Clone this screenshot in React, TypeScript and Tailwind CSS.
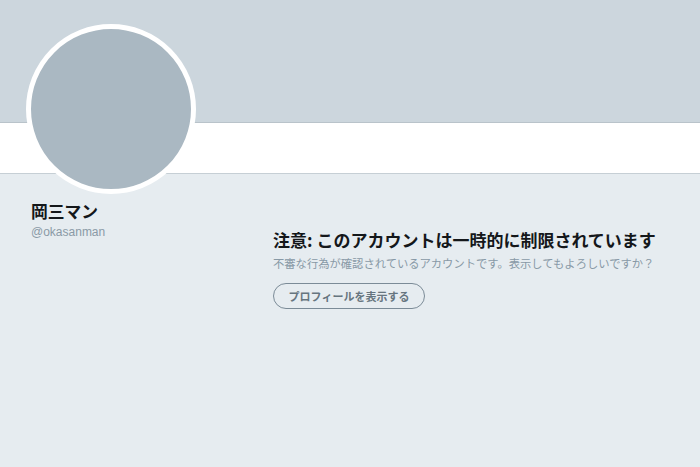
const jp = "font-['Noto_Sans_CJK_JP','Noto_Sans',sans-serif]";

const App = () => {
  return (
    <div className={`relative flex h-[467px] w-[700px] flex-col overflow-hidden bg-[#e6ecf0] ${jp}`}>
      <div className="h-[123px] shrink-0 border-b border-[#b9c3ca] bg-[#ccd6dd]" />
      <div className="h-[51px] shrink-0 border-b border-[#c6cfd5] bg-white" />

      {/* avatar sits over banner + nav */}
      <div className="absolute left-[26px] top-[24px] h-[170px] w-[170px] rounded-full border-[5px] border-white bg-[#aab8c2]" />

      <div className="flex flex-1">
        <div className="w-[273px] shrink-0 pl-[31px] pt-[25px]">
          <h1 className="text-[16.8px] font-bold leading-[24px] text-[#14171a]">岡三マン</h1>
          <p className="mt-[2px] font-['Liberation_Sans',sans-serif] text-[12px] leading-[14px] text-[#8a9aa6]">
            @okasanman
          </p>
        </div>
        <div className="flex-1 pt-[55px]">
          <h2 className="text-[17px] font-bold leading-[22px] text-[#14171a]">
            注意: このアカウントは一時的に制限されています
          </h2>
          <p className="mt-[4px] text-[11.3px] leading-[16px] text-[#8899a6]">
            不審な行為が確認されているアカウントです。表示してもよろしいですか？
          </p>
          <button
            type="button"
            className="mt-[12px] h-[26px] w-[152px] rounded-full border border-[#7b8b97] bg-transparent text-[11px] font-bold text-[#66757f]"
          >
            プロフィールを表示する
          </button>
        </div>
      </div>
    </div>
  );
};

export default App;
